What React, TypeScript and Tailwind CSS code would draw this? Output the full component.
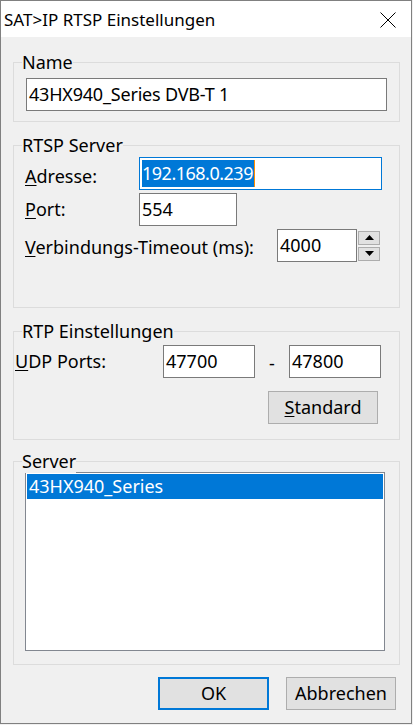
import React from "react";

const font = { fontFamily: '"Noto Sans", "Open Sans", sans-serif' };

function Group({ title, className, children }: { title: string; className: string; children?: React.ReactNode }) {
  return (
    <div className={`relative w-[387px] border border-[#dcdcdc] ${className}`}>
      <span className="absolute left-[8px] top-[-13px] h-[24px] leading-[24px] bg-[#f0f0f0] text-[18px] text-black">
        {title}
      </span>
      {children}
    </div>
  );
}

function Field({ w, children, focused }: { w: string; children?: React.ReactNode; focused?: boolean }) {
  return (
    <div
      className={`${w} h-[33px] bg-white border ${focused ? "border-[#0078d7]" : "border-[#7a7a7a]"} pl-[2px] flex items-center text-[18px] text-black shrink-0`}
    >
      {children}
    </div>
  );
}

function Btn({ children, primary, w }: { children: React.ReactNode; primary?: boolean; w: string }) {
  return (
    <div
      className={`${w} h-[33px] bg-[#e1e1e1] flex items-center justify-center text-[18px] text-black ${
        primary ? "border-2 border-[#0078d7]" : "border border-[#adadad]"
      }`}
    >
      {children}
    </div>
  );
}

export default function App() {
  return (
    <div className="w-[413px] h-[725px] bg-[#f0f0f0]" style={font}>
      <div className="w-[412px] h-[724px] border border-[#808080] bg-[#f0f0f0] flex flex-col">
        {/* title bar */}
        <div className="h-[36px] bg-white flex items-center justify-between pl-[3px] pr-[15px] shrink-0">
          <span className="text-[17px] text-black leading-none">SAT&gt;IP RTSP Einstellungen</span>
          <svg width="16" height="16" viewBox="0 0 16 16" className="mt-[1px]">
            <path d="M0.5 0.5 L15.5 15.5 M15.5 0.5 L0.5 15.5" stroke="#000" strokeWidth="1" fill="none" />
          </svg>
        </div>

        <div className="pl-[12px] flex flex-col">
          {/* Name */}
          <Group title="Name" className="mt-[25px] h-[60px] pt-[15px] pl-[12px]">
            <Field w="w-[361px]">
              <span className="tracking-[-0.2px]">43HX940_Series DVB-T 1</span>
            </Field>
          </Group>

          {/* RTSP Server */}
          <Group title="RTSP Server" className="mt-[23px] h-[163px] pt-[11px] pl-[11px]">
            <div className="flex items-center h-[33px]">
              <span className="w-[114px] text-[18px] pt-[6px]">
                <u className="underline-offset-2">A</u>dresse:
              </span>
              <Field w="w-[243px]" focused>
                <span className="relative bg-[#0078d7] text-white h-[27px] leading-[27px] tracking-[-0.5px] pr-[1px]">
                  192.168.0.239
                  <span className="absolute right-[-1px] top-0 w-[1px] h-[27px] bg-[#ff8c00]" />
                </span>
              </Field>
            </div>
            <div className="flex items-center h-[33px] mt-[3px]">
              <span className="w-[114px] text-[18px]">
                <u className="underline-offset-2">P</u>ort:
              </span>
              <Field w="w-[98px]">554</Field>
            </div>
            <div className="flex items-center h-[33px] mt-[3px]">
              <span className="w-[252px] text-[18px] pt-[4px]">
                <u className="underline-offset-2">V</u>erbindungs-Timeout (ms):
              </span>
              <Field w="w-[80px]">4000</Field>
              <div className="ml-[1px] flex flex-col gap-[2px]">
                <div className="w-[22px] h-[14px] bg-[#e1e1e1] border border-[#adadad] flex items-center justify-center">
                  <svg width="9" height="5" viewBox="0 0 9 5">
                    <path d="M4.5 0 L9 5 L0 5 Z" fill="#000" />
                  </svg>
                </div>
                <div className="w-[22px] h-[14px] bg-[#e1e1e1] border border-[#adadad] flex items-center justify-center">
                  <svg width="9" height="5" viewBox="0 0 9 5">
                    <path d="M0 0 L9 0 L4.5 5 Z" fill="#000" />
                  </svg>
                </div>
              </div>
            </div>
          </Group>

          {/* RTP Einstellungen */}
          <Group title="RTP Einstellungen" className="mt-[23px] h-[109px] pt-[13px] pl-[1px]">
            <div className="flex items-center h-[33px]">
              <span className="w-[148px] text-[18px]">
                <u className="underline-offset-2">U</u>DP Ports:
              </span>
              <Field w="w-[92px]">47700</Field>
              <span className="w-[34px] text-center text-[18px] pt-[4px]">-</span>
              <Field w="w-[92px]">47800</Field>
            </div>
            <div className="mt-[13px] pl-[253px]">
              <Btn w="w-[110px]">
                <span>
                  <u className="underline-offset-2">S</u>tandard
                </span>
              </Btn>
            </div>
          </Group>

          {/* Server */}
          <Group title="Server" className="mt-[21px] h-[204px] pt-[10px] pl-[11px]">
            <div className="w-[360px] h-[179px] bg-white border border-[#828790] p-[1px]">
              <div className="h-[25px] bg-[#0078d7] text-white text-[18px] leading-[25px] pl-[2px]">43HX940_Series</div>
            </div>
          </Group>

          {/* Buttons */}
          <div className="mt-[12px] flex pl-[145px] gap-[17px]">
            <Btn w="w-[111px]" primary>
              OK
            </Btn>
            <Btn w="w-[110px]">Abbrechen</Btn>
          </div>
        </div>
      </div>
    </div>
  );
}
